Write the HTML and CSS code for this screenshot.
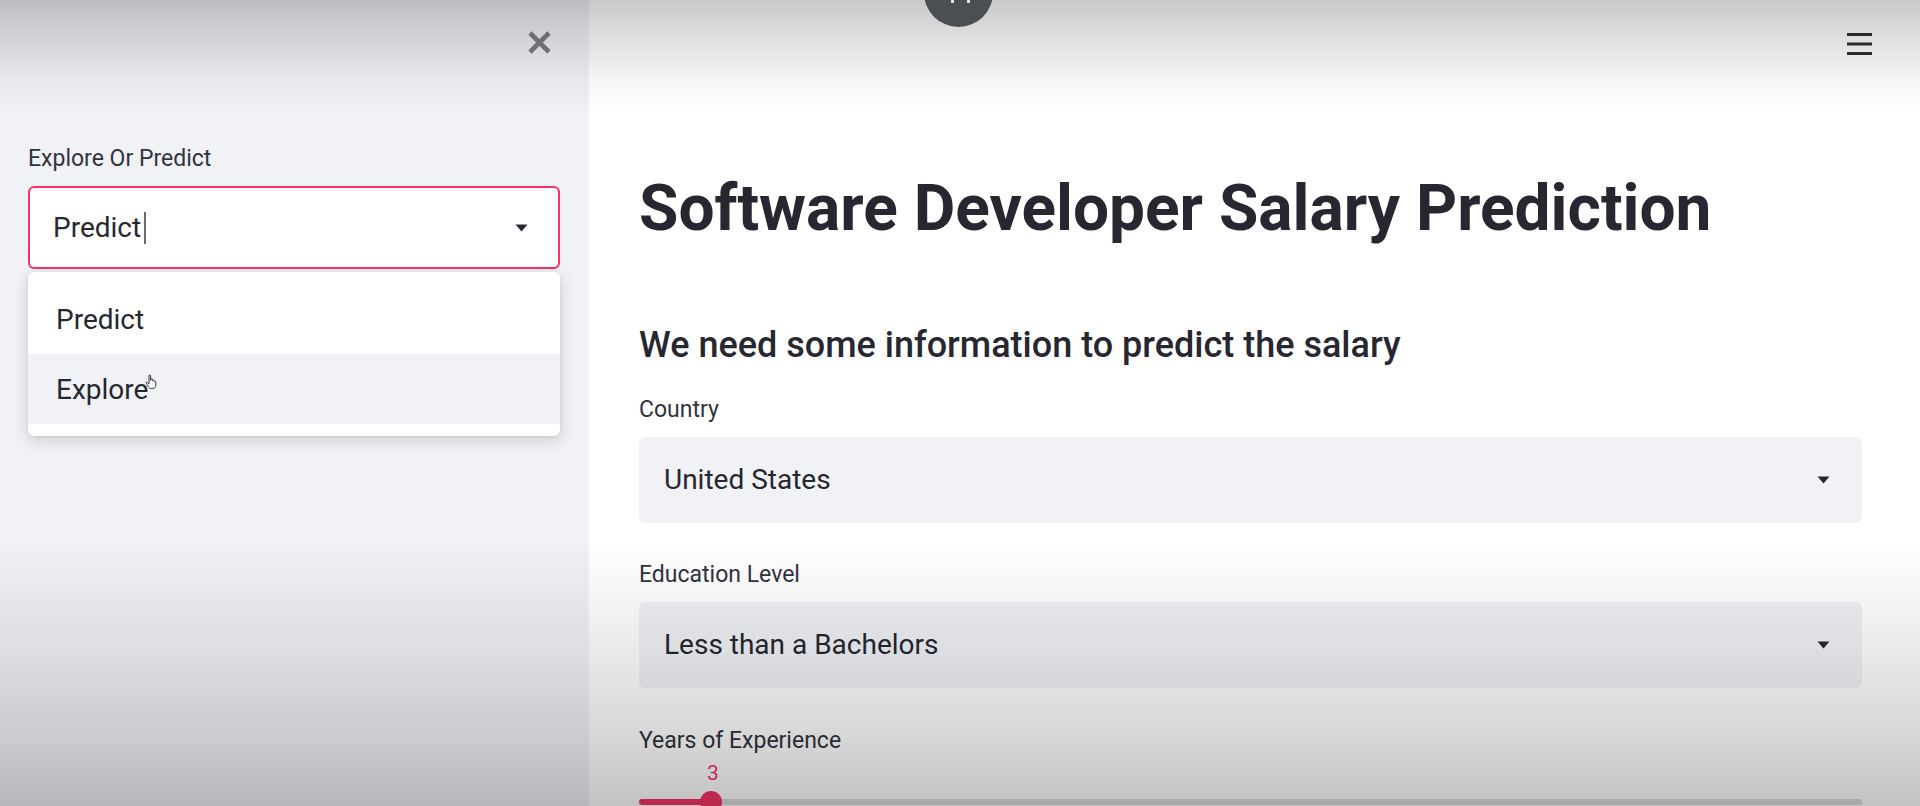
FILE: index.html
```html
<!DOCTYPE html>
<html lang="en">
<head>
<meta charset="utf-8">
<title>Software Developer Salary Prediction</title>
<link rel="stylesheet" href="styles.css">
</head>
<body>
<div class="app">
  <aside class="sidebar">
    <div class="sb-top">
      <button class="close-btn" aria-label="Close sidebar">
        <svg width="25" height="25" viewBox="0 0 25 25"><path d="M3 3 L22 22 M22 3 L3 22" stroke="#7d7e83" stroke-width="4.6" stroke-linecap="butt" fill="none"/></svg>
      </button>
    </div>
    <div class="sb-content">
      <label class="wlabel">Explore Or Predict</label>
      <div class="select focused">
        <span class="val">Predict</span><span class="text-cursor"></span>
        <svg class="caret" width="13" height="8" viewBox="0 0 13 8"><path d="M0.5 0.5 H12.5 L6.5 7.5 Z" fill="#262730"/></svg>
      </div>
      <div class="menu">
        <div class="opt">Predict</div>
        <div class="opt hover">Explore<svg class="hand" width="14" height="16" viewBox="0 0 14 16"><path d="M4 1.5 C4 0.8 5.6 0.8 5.6 1.5 V6.5 L6 5.2 C6.2 4.6 7.6 4.6 7.6 5.4 V6.6 C7.8 6 9.2 6 9.2 6.8 V7.6 C9.4 7 10.8 7.1 10.8 8 V11 C10.8 13 9.6 14.5 7.8 14.5 H6.2 C4.8 14.5 4 13.6 3.2 12.4 L1.2 9.2 C0.8 8.5 1.8 7.8 2.4 8.4 L4 10 Z" fill="#fff" stroke="#222" stroke-width="0.9"/></svg></div>
      </div>
    </div>
  </aside>
  <main class="main">
    <header class="topbar">
      <button class="menu-btn" aria-label="Main menu">
        <svg width="25" height="23" viewBox="0 0 25 23"><path d="M0 1.5 H25 M0 11 H25 M0 20.5 H25" stroke="#2f3035" stroke-width="3" fill="none"/></svg>
      </button>
    </header>
    <section class="block">
      <h1 class="title">Software Developer Salary Prediction</h1>
      <h3 class="subtitle">We need some information to predict the salary</h3>

      <div class="field">
        <label class="wlabel">Country</label>
        <div class="select">
          <span class="val">United States</span>
          <svg class="caret" width="13" height="8" viewBox="0 0 13 8"><path d="M0.5 0.5 H12.5 L6.5 7.5 Z" fill="#262730"/></svg>
        </div>
      </div>

      <div class="field">
        <label class="wlabel">Education Level</label>
        <div class="select">
          <span class="val">Less than a Bachelors</span>
          <svg class="caret" width="13" height="8" viewBox="0 0 13 8"><path d="M0.5 0.5 H12.5 L6.5 7.5 Z" fill="#262730"/></svg>
        </div>
      </div>

      <div class="field slider-field">
        <label class="wlabel">Years of Experience</label>
        <div class="slider-val" style="padding-left:68px">3</div>
        <div class="track">
          <div class="fill" style="width:72px"></div>
          <div class="thumb" style="left:61px"></div>
        </div>
      </div>
    </section>
  </main>
</div>
<div class="vignette"></div>
<div class="rec-dot"><span class="spark s1"></span><span class="spark s2"></span></div>
</body>
</html>
```

FILE: styles.css
```css
html, body {
  margin: 0;
  padding: 0;
  height: 100%;
  overflow: hidden;
  background: #ffffff;
  font-family: Roboto, "Liberation Sans", sans-serif;
  color: #262730;
}

.app {
  display: flex;
  height: 806px;
}

/* ---------- Sidebar ---------- */
.sidebar {
  flex: none;
  width: 589px;
  box-sizing: border-box;
  background: #f0f2f6;
  padding: 30px 29px 0 28px;
}

.sb-top {
  display: flex;
  justify-content: flex-end;
  height: 25px;
}

.close-btn {
  width: 25px;
  height: 25px;
  padding: 0;
  margin-right: 8px;
  border: 0;
  background: transparent;
  display: flex;
}

.sb-content {
  margin-top: 89px;
}

.wlabel {
  display: block;
  font-size: 23px;
  line-height: 30px;
  color: #31333f;
}

.select {
  display: flex;
  align-items: center;
  box-sizing: border-box;
  height: 86px;
  margin-top: 12px;
  padding: 0 32px 0 25px;
  border-radius: 6px;
  background: #f0f2f6;
  font-size: 28px;
  color: #262730;
}

.select .caret {
  margin-left: auto;
  flex: none;
}

.select.focused {
  height: 83px;
  margin-top: 12px;
  background: #ffffff;
  border: 2px solid #f63366;
  padding-left: 23px;
  padding-right: 30px;
}

.text-cursor {
  display: inline-block;
  width: 2px;
  height: 32px;
  margin-left: 3px;
  background: #6a6a6a;
}

.menu {
  margin-top: 3px;
  background: #ffffff;
  border-radius: 6px;
  box-shadow: 0 4px 16px rgba(0, 0, 0, 0.16), 0 1px 3px rgba(0, 0, 0, 0.08);
  padding: 12px 0 12px;
}

.opt {
  display: flex;
  align-items: center;
  height: 70px;
  padding-left: 28px;
  font-size: 28px;
  color: #262730;
}

.opt.hover {
  background: #f0f2f6;
}

.hand {
  margin-left: -3px;
  margin-top: -14px;
}

/* ---------- Main ---------- */
.main {
  flex: 1;
  box-sizing: border-box;
  padding: 0 58px 0 50px;
}

.topbar {
  display: flex;
  justify-content: flex-end;
  box-sizing: border-box;
  height: 80px;
  padding-top: 33px;
  margin-right: -10px;
}

.menu-btn {
  width: 25px;
  height: 23px;
  padding: 0;
  border: 0;
  background: transparent;
  display: flex;
}

.title {
  margin: 91px 0 0;
  font-size: 64px;
  line-height: 1.2;
  font-weight: 700;
  color: #262730;
}

.subtitle {
  margin: 76px 0 0;
  font-size: 36px;
  line-height: 1.2;
  font-weight: 500;
  color: #262730;
}

.field {
  margin-top: 28px;
}

.field + .field {
  margin-top: 37px;
}

.field + .slider-field {
  margin-top: 38px;
}

.slider-val {
  margin-top: 4px;
  font-size: 21px;
  line-height: 26px;
  color: #f63366;
}

.track {
  position: relative;
  height: 6px;
  margin-top: 13px;
  border-radius: 3px;
  background: #dcdde2;
}

.fill {
  height: 100%;
  border-radius: 3px;
  background: #f63366;
}

.thumb {
  position: absolute;
  top: -8px;
  width: 22px;
  height: 22px;
  border-radius: 50%;
  background: #f63366;
}

/* ---------- Overlays (video vignetting / recorder button) ---------- */
.vignette {
  position: fixed;
  inset: 0;
  pointer-events: none;
  background: linear-gradient(to bottom,
    rgba(0, 0, 0, 0.21) 0px,
    rgba(0, 0, 0, 0.12) 40px,
    rgba(0, 0, 0, 0.04) 80px,
    rgba(0, 0, 0, 0) 115px,
    rgba(0, 0, 0, 0) 540px,
    rgba(0, 0, 0, 0.08) 645px,
    rgba(0, 0, 0, 0.16) 740px,
    rgba(0, 0, 0, 0.24) 806px);
}

.rec-dot {
  position: fixed;
  left: 924px;
  top: -42px;
  width: 69px;
  height: 69px;
  border-radius: 50%;
  background: #4b4f54;
}

.spark {
  position: absolute;
  top: 42px;
  width: 3px;
  height: 3px;
  background: #ffffff;
  border-radius: 1px;
}

.s1 { left: 27px; }
.s2 { left: 43px; }
```
